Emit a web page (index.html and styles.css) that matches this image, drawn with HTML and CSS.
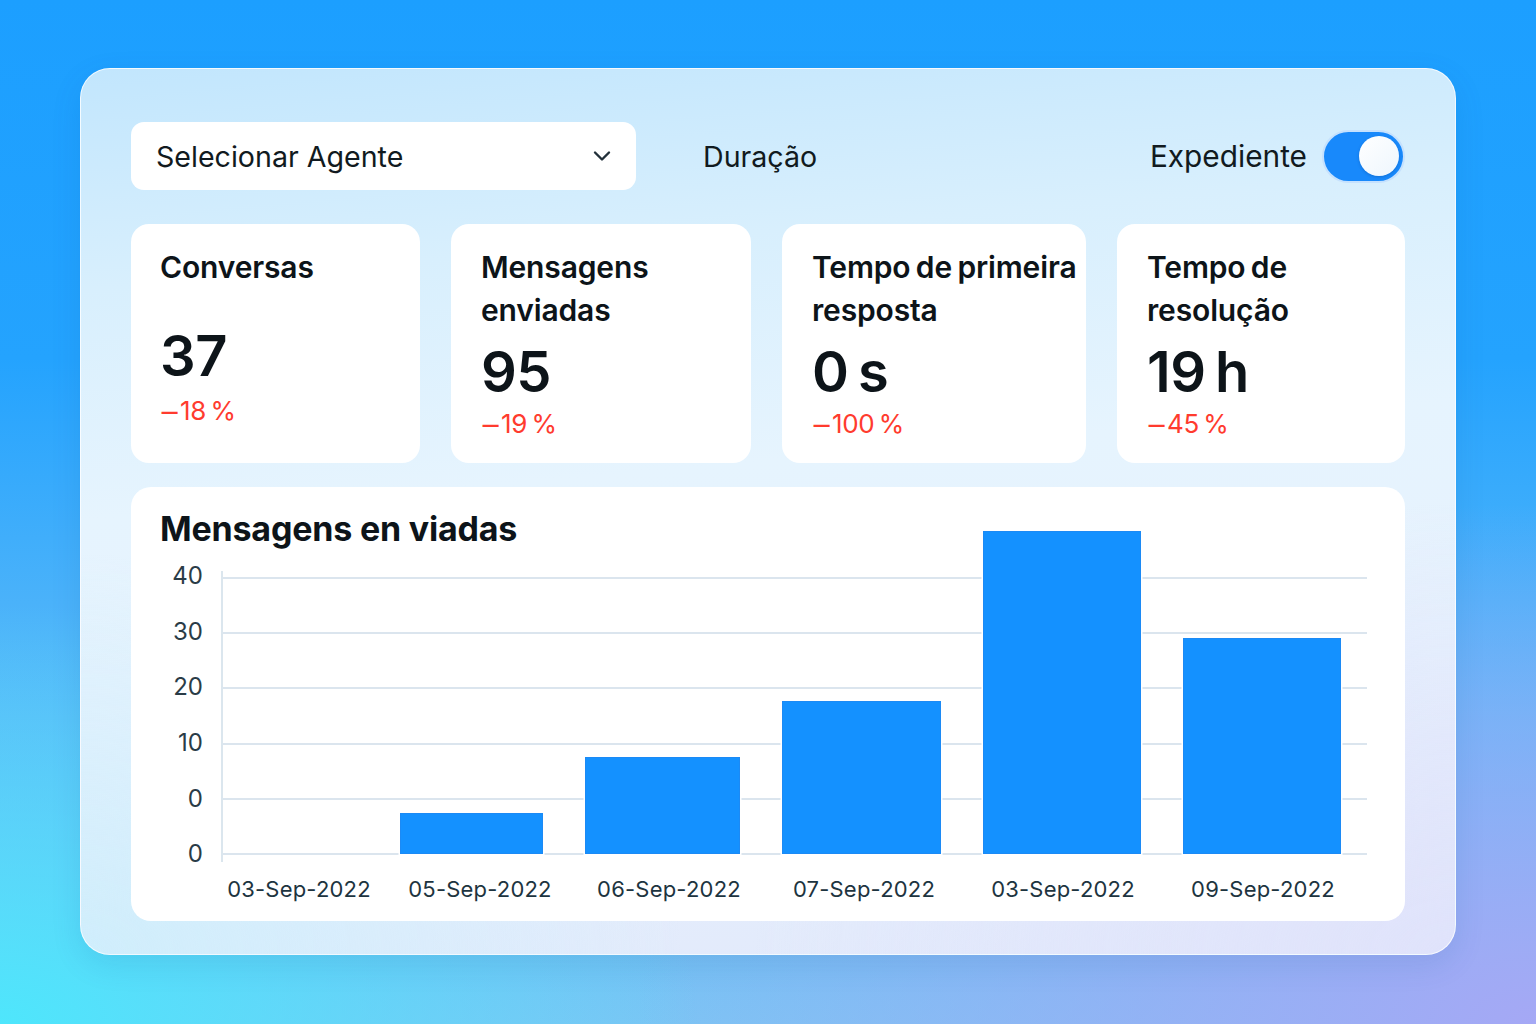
FILE: index.html
```html
<!DOCTYPE html>
<html lang="pt">
<head>
<meta charset="utf-8">
<title>Relatório</title>
<link rel="stylesheet" href="styles.css">
</head>
<body>
<main class="panel">
  <header class="toolbar">
    <div class="select">
      <span>Selecionar Agente</span>
      <svg class="chev" width="20" height="14" viewBox="0 0 20 14"><path d="M3 3.5 L10 10.5 L17 3.5" fill="none" stroke="#22303a" stroke-width="2.4" stroke-linecap="round" stroke-linejoin="round"/></svg>
    </div>
    <div class="duration">Duração</div>
    <div class="spacer"></div>
    <div class="switch-wrap">
      <span>Expediente</span>
      <div class="switch"><div class="knob"></div></div>
    </div>
  </header>

  <section class="cards">
    <div class="card card-single">
      <div class="card-title">Conversas</div>
      <div class="card-value">37</div>
      <div class="card-delta"><span class="minus">−</span>18&#8201;%</div>
    </div>
    <div class="card">
      <div class="card-title">Mensagens<br>enviadas</div>
      <div class="card-value">95</div>
      <div class="card-delta"><span class="minus">−</span>19&#8201;%</div>
    </div>
    <div class="card">
      <div class="card-title">Tempo de primeira<br>resposta</div>
      <div class="card-value">0 s</div>
      <div class="card-delta"><span class="minus">−</span>100&#8201;%</div>
    </div>
    <div class="card">
      <div class="card-title">Tempo de<br>resolução</div>
      <div class="card-value">19 h</div>
      <div class="card-delta"><span class="minus">−</span>45&#8201;%</div>
    </div>
  </section>

  <section class="chart-card">
    <h2 class="chart-title">Mensagens en viadas</h2>
    <div class="chart">
      <div class="y-axis">
        <span>40</span><span>30</span><span>20</span><span>10</span><span>0</span><span>0</span>
      </div>
      <div class="plot-wrap">
        <div class="plot">
          <div class="col"><div class="bar bar-empty" style="height:0px"></div></div>
          <div class="col"><div class="bar" style="height:41px"></div></div>
          <div class="col"><div class="bar" style="height:97px"></div></div>
          <div class="col"><div class="bar" style="height:153px"></div></div>
          <div class="col"><div class="bar" style="height:323px"></div></div>
          <div class="col"><div class="bar" style="height:216px"></div></div>
        </div>
        <div class="x-axis">
          <span>03-Sep-2022</span>
          <span>05-Sep-2022</span>
          <span>06-Sep-2022</span>
          <span>07-Sep-2022</span>
          <span>03-Sep-2022</span>
          <span>09-Sep-2022</span>
        </div>
      </div>
    </div>
  </section>
</main>
</body>
</html>
```

FILE: styles.css
```css
* { box-sizing: border-box; }
html, body { margin: 0; padding: 0; }
body {
  width: 1536px;
  height: 1024px;
  overflow: hidden;
  font-family: "Inter", "Noto Sans", sans-serif;
  color: #0d1419;
  background:
    radial-gradient(ellipse 700px 420px at 0% 100%, rgba(78,230,252,1) 0%, rgba(78,230,252,0.6) 40%, rgba(78,230,252,0) 100%),
    radial-gradient(ellipse 900px 520px at 100% 100%, rgba(165,168,245,1) 0%, rgba(160,168,245,0.6) 45%, rgba(160,168,245,0) 100%),
    linear-gradient(180deg, #1c9fff 0%, #24a3fe 35%, #5cb9f8 70%, #7cc4f4 100%);
  padding-top: 68px;
}

.panel {
  margin: 0 80px;
  width: 1376px;
  height: 887px;
  border-radius: 30px;
  padding: 53px 50px 33px;
  border: 1.5px solid rgba(255,255,255,0.75);
  background:
    radial-gradient(ellipse 600px 400px at 0% 100%, rgba(205,238,252,0.9), rgba(205,238,252,0) 100%),
    radial-gradient(ellipse 700px 450px at 100% 100%, rgba(224,227,251,1), rgba(224,227,251,0) 100%),
    linear-gradient(175deg, #c2e6fd 0%, #d8effd 22%, #e6f4fe 45%, #e6f1fd 70%, #e2e9fb 100%);
  box-shadow: 0 10px 30px rgba(20, 80, 160, 0.12);
  display: flex;
  flex-direction: column;
}

/* toolbar */
.toolbar {
  display: flex;
  align-items: center;
  height: 68px;
}
.select {
  width: 505px;
  height: 68px;
  background: #fff;
  border-radius: 13px;
  display: flex;
  align-items: center;
  justify-content: space-between;
  padding: 0 24px 0 25px;
  font-size: 28.6px;
  color: #111a20;
}
.chev { display: block; }
.duration {
  margin-left: 67px;
  font-size: 28.6px;
  color: #111a20;
}
.spacer { flex: 1; }
.switch-wrap {
  display: flex;
  align-items: center;
  gap: 15px;
  font-size: 29.8px;
  color: #111a20;
}
.switch {
  width: 83px;
  height: 53px;
  border-radius: 27px;
  background: #1889fb;
  border: 2px solid rgba(255,255,255,0.75);
  display: flex;
  align-items: center;
  justify-content: flex-end;
  padding-right: 4px;
}
.knob {
  width: 40px;
  height: 40px;
  border-radius: 50%;
  background: linear-gradient(135deg, #ffffff 0%, #eef6fd 100%);
  box-shadow: 0 1px 3px rgba(0,40,100,0.25);
}

/* cards */
.cards {
  margin-top: 34px;
  display: grid;
  grid-template-columns: minmax(0, 289fr) minmax(0, 300fr) minmax(0, 304fr) minmax(0, 288fr);
  column-gap: 31px;
  height: 240px;
}
.card {
  background: #fff;
  border-radius: 18px;
  padding: 22px 10px 0 30px;
  display: flex;
  flex-direction: column;
}
.card-single { padding-left: 29px; }
.card-title {
  font-size: 30px;
  font-weight: 600;
  line-height: 43px;
  letter-spacing: -0.15px;
  word-spacing: -2px;
  color: #0d1419;
  white-space: nowrap;
}
.card-value {
  margin-top: 10px;
  font-size: 56px;
  font-weight: 600;
  line-height: 60px;
  letter-spacing: -0.5px;
  word-spacing: -4px;
  color: #0d1419;
}
.card-single .card-value { margin-top: 37px; }
.card-delta {
  margin-top: 6px;
  font-size: 26px;
  line-height: 32px;
  color: #ff3b2e;
  letter-spacing: -0.3px;
}
.card-single .card-delta { margin-top: 9px; }
.minus {
  display: inline-block;
  transform: scaleX(1.35);
  transform-origin: left center;
  margin-left: -2px;
  margin-right: 5px;
}

/* chart */
.chart-card {
  margin-top: 24px;
  background: #fff;
  border-radius: 20px;
  height: 435px;
  padding: 20px 38px 0 29px;
  display: flex;
  flex-direction: column;
}
.chart-title {
  margin: 0;
  font-size: 34px;
  font-weight: 700;
  line-height: 44px;
  letter-spacing: -0.2px;
  color: #0d1419;
}
.chart {
  margin-top: 20px;
  display: flex;
}
.y-axis {
  width: 44px;
  height: 302px;
  display: flex;
  flex-direction: column;
  justify-content: space-between;
  align-items: flex-end;
  font-size: 24px;
  line-height: 24px;
  color: #2a3c47;
  margin-top: -7px;
}
.y-axis span { display: block; }
.plot-wrap {
  margin-left: 18px;
  width: 1146px;
}
.plot {
  height: 291px;
  padding-bottom: 8px;
  display: grid;
  grid-template-columns: 158px 185px 197px 201px 200px 200px;
  grid-template-rows: 283px;
  background-image:
    linear-gradient(to right, #dbe6ee 0, #dbe6ee 2px, transparent 2px),
    repeating-linear-gradient(to bottom, #dbe5ee 0px, #dbe5ee 2px, transparent 2px, transparent 55.2px);
  background-position: 0 0, 0 6px;
  background-repeat: no-repeat, repeat;
  background-size: 100% 100%, 100% 100%;
}
.col {
  display: flex;
  justify-content: center;
  align-items: flex-end;
  padding: 0 21px;
  height: 283px;
}
.bar {
  flex: none;
  width: 100%;
  background: #1491ff;
  border: 1px solid #1c8af5;
  box-shadow: 0 0 0 1.5px #fff;
}
.bar-empty { border: none; box-shadow: none; }
.x-axis {
  margin-top: 13px;
  margin-left: 2px;
  display: grid;
  grid-template-columns: 152px 210px 168px 222px 176px 224px;
  font-size: 22px;
  line-height: 28px;
  color: #1d3440;
  letter-spacing: 0.2px;
}
.x-axis span {
  text-align: center;
  white-space: nowrap;
}
```
